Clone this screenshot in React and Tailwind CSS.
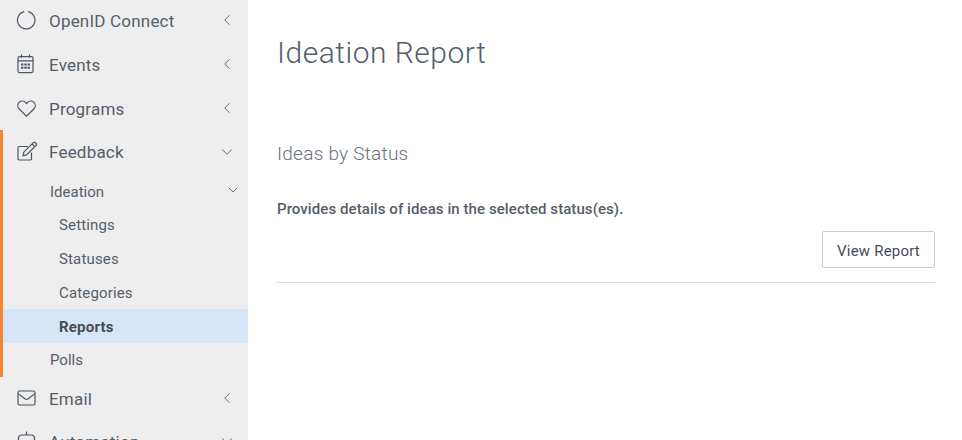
import React from 'react';
import { ChevronLeft, ChevronDown } from 'lucide-react';

const CircleIcon = () => (
  <svg width="20" height="20" viewBox="0 0 20 20" fill="none" stroke="#4b5563" strokeWidth="1.2" className="-ml-px">
    <path d="M12.2 1.7a8.7 8.7 0 1 1-4 0" />
  </svg>
);

const CalendarIcon = () => (
  <svg width="18" height="20" viewBox="0 0 18 20" fill="none" stroke="#4b5563" strokeWidth="1.2">
    <rect x="1" y="2.6" width="15" height="16" rx="1.5" />
    <path d="M1 6.8h15M4.5 0.5v3.2M12.5 0.5v3.2" />
    <path d="M4 9.5h2.4v2H4zM7.3 9.5h2.4v2H7.3zM10.6 9.5H13v2h-2.4zM4 12.7h2.4v2H4zM7.3 12.7h2.4v2H7.3zM10.6 12.7H13v2h-2.4z" fill="#4b5563" stroke="none" />
  </svg>
);

const HeartIcon = () => (
  <svg width="19" height="19" viewBox="0 0 19 19" fill="none" stroke="#4b5563" strokeWidth="1.2">
    <path d="M9.5 17.2 2.2 10A4.8 4.8 0 0 1 2 3.4a4.9 4.9 0 0 1 6.7.2l.8.9.8-.9a4.9 4.9 0 0 1 6.7-.2 4.8 4.8 0 0 1-.2 6.6z" />
  </svg>
);

const EditIcon = () => (
  <svg width="21" height="21" viewBox="0 0 21 21" fill="none" stroke="#4b5563" strokeWidth="1.2">
    <path d="M14.5 11.5v6.2a1.3 1.3 0 0 1-1.3 1.3H2.3A1.3 1.3 0 0 1 1 17.7V6.8a1.3 1.3 0 0 1 1.3-1.3H11" />
    <path d="m6.8 11.2 9.6-9.6a1.3 1.3 0 0 1 1.8 0l.9.9a1.3 1.3 0 0 1 0 1.8l-9.6 9.6-3.5.8z" />
    <path d="m15 3 2.7 2.7" />
  </svg>
);

const MailIcon = () => (
  <svg width="19" height="16" viewBox="0 0 19 16" fill="none" stroke="#4b5563" strokeWidth="1.2">
    <rect x="1" y="1" width="17" height="14" rx="1.4" />
    <path d="m1.2 3.6 6.6 5.2a2.8 2.8 0 0 0 3.4 0l6.6-5.2" />
  </svg>
);

const BotIcon = () => (
  <svg width="20" height="20" viewBox="0 0 20 20" fill="none" stroke="#4b5563" strokeWidth="1.2">
    <rect x="1.5" y="4" width="16" height="14" rx="3" />
    <path d="M9.5 0.5V4" />
  </svg>
);

const NavRow = ({ icon, label, open, className = 'h-11', textClass = 'pt-1' }) => (
  <div className={`flex items-center pl-[17px] pr-[11px] ${className}`}>
    <span className="flex w-8 shrink-0 items-center">{icon}</span>
    <span className={`flex-1 text-[17px] tracking-[0.2px] text-[#555e6b] ${textClass}`}>{label}</span>
    {open ? (
      <ChevronDown size={18} strokeWidth={1.2} className="mr-px text-[#555e6b]" />
    ) : (
      <ChevronLeft size={18} strokeWidth={1.2} className="mr-px text-[#555e6b]" />
    )}
  </div>
);

const App = () => {
  const subItems = ['Settings', 'Statuses', 'Categories'];

  return (
    <div className="flex h-[440px] w-[962px] overflow-hidden bg-white font-['Roboto',sans-serif]">
      {/* Sidebar */}
      <aside className="-mt-[2px] w-[248px] shrink-0 bg-[#eeeeee]">
        <NavRow icon={<CircleIcon />} label="OpenID Connect" />
        <NavRow icon={<CalendarIcon />} label="Events" />
        <NavRow icon={<HeartIcon />} label="Programs" />

        <div className="border-l-[3px] border-[#ff8427]">
          <div className="-ml-[3px]">
            <NavRow icon={<EditIcon />} label="Feedback" open className="h-[43px]" textClass="pt-[2px]" />
          </div>
          <div className="flex h-[34px] items-center pl-[47px] pr-[7px] text-[15px] text-[#555e6b]">
            <span className="flex-1 pt-1">Ideation</span>
            <ChevronDown size={16} strokeWidth={1.3} />
          </div>
          {subItems.map((item) => (
            <div key={item} className="flex h-[34px] items-center pl-[56px] pt-[2px] text-[15px] tracking-[0.15px] text-[#555e6b]">
              {item}
            </div>
          ))}
          <div className="flex h-[34px] items-center bg-[#d6e6f8] pl-[56px] pt-[2px] text-[15px] font-bold tracking-[0.2px] text-[#464d59]">
            Reports
          </div>
          <div className="flex h-[34px] items-center pl-[47px] text-[15px] text-[#555e6b]">Polls</div>
        </div>

        <NavRow icon={<MailIcon />} label="Email" className="h-[42px]" />
        <NavRow icon={<BotIcon />} label="Automation" open />
      </aside>

      {/* Content */}
      <main className="flex-1 pl-[28px] pr-[27px]">
        <h1 className="mt-[33px] pl-px text-[30px] font-light leading-[40px] tracking-[0.5px] text-[#555e6b]">
          Ideation Report
        </h1>
        <h2 className="mt-[69px] pl-px text-[19px] font-light leading-6 tracking-[0.25px] text-[#69717d]">
          Ideas by Status
        </h2>
        <p className="mt-[33px] pl-px text-[15px] font-medium leading-5 tracking-[0.08px] text-[#555e6b]">
          Provides details of ideas in the selected status(es).
        </p>
        <div className="mt-[12px] flex justify-end border-b border-[#dddddd] pb-[14px]">
          <button className="h-[37px] w-[113px] rounded-[2px] border border-[#cccccc] bg-white pt-[3px] text-[15px] tracking-[0.2px] text-[#464d59]">
            View Report
          </button>
        </div>
      </main>
    </div>
  );
};

export default App;
